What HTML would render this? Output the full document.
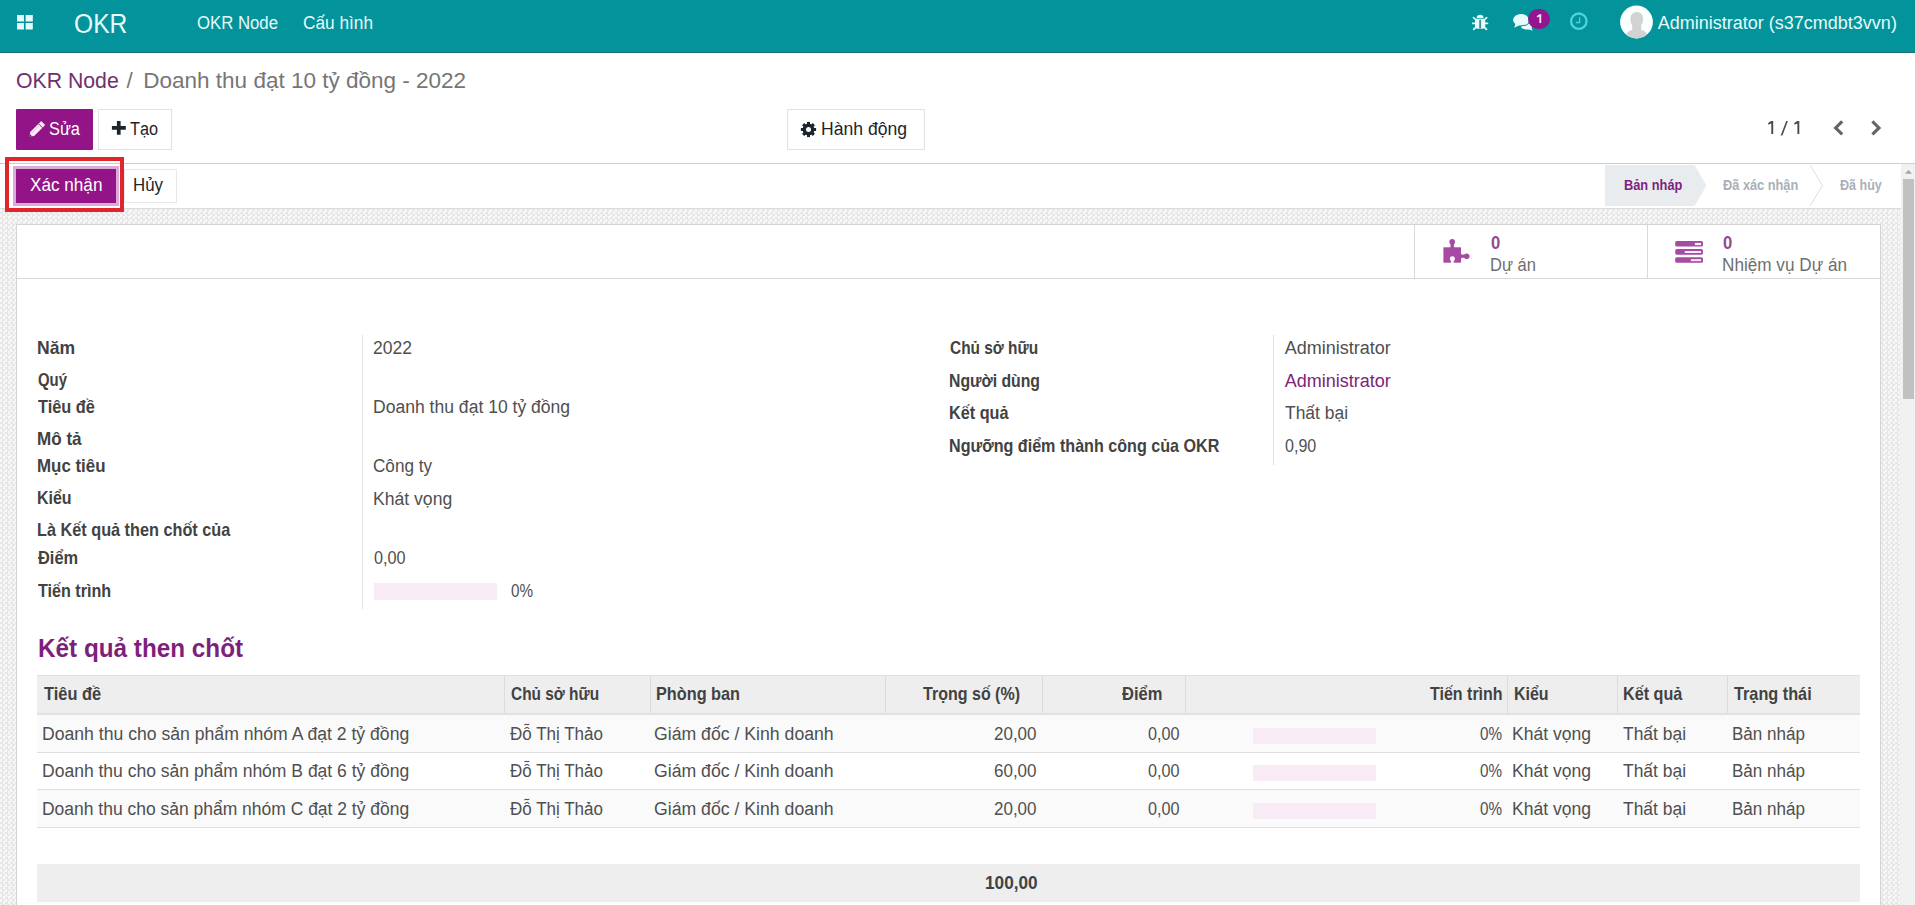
<!DOCTYPE html>
<html><head><meta charset="utf-8"><title>OKR Node</title>
<style>
html,body{margin:0;padding:0;}
body{width:1915px;height:905px;overflow:hidden;position:relative;background:#fff;font-family:'Liberation Sans', sans-serif;}
.t{position:absolute;white-space:nowrap;font-family:'Liberation Sans', sans-serif;transform-origin:0 0;}
.a{position:absolute;}
</style></head><body>
<!-- navbar -->
<div class="a" style="left:0;top:0;width:1915px;height:52px;background:#03939a"></div>
<div class="a" style="left:0;top:52px;width:1915px;height:1px;background:#1e6c72"></div>
<svg class="a" style="left:17px;top:15px" width="17" height="15" viewBox="0 0 17 15"><g fill="#e6fbfb"><rect x="0" y="0" width="7" height="6.5"/><rect x="8.6" y="0" width="7.2" height="6.5"/><rect x="0" y="8" width="7" height="6.5"/><rect x="8.6" y="8" width="7.2" height="6.5"/></g></svg>
<!-- bug -->
<svg class="a" style="left:1470px;top:13px" width="20" height="19" viewBox="0 0 20 19"><g fill="#e6fbfb"><path d="M6.6 4.9 Q6.9 1.7 10.1 1.7 Q13.3 1.7 13.6 4.9 Z"/><path d="M5 5.8 H15.2 V13.6 Q15.2 15.8 12.8 15.8 H7.4 Q5 15.8 5 13.6 Z"/></g><rect x="9.2" y="6.8" width="1.9" height="8.7" fill="#3f8f95"/><g stroke="#e6fbfb" stroke-width="1.7" stroke-linecap="round"><line x1="3.5" y1="4.7" x2="5.4" y2="6.3"/><line x1="16.7" y1="4.7" x2="14.8" y2="6.3"/><line x1="2.7" y1="10.3" x2="5" y2="10.3"/><line x1="17.5" y1="10.3" x2="15.2" y2="10.3"/><line x1="5.4" y1="14.6" x2="3.7" y2="16.3"/><line x1="14.8" y1="14.6" x2="16.5" y2="16.3"/></g></svg>
<!-- chat -->
<svg class="a" style="left:1511px;top:12px" width="26" height="20" viewBox="0 0 26 20"><g fill="#e6fbfb"><path d="M10 9 Q18 9.5 20.5 12.5 Q21.5 15.5 20.5 16.5 L22 18.5 Q18.5 18 17.5 17.5 Q13 18 10.5 16 Z"/><ellipse cx="10" cy="7.8" rx="8" ry="5.8"/><path d="M4.5 11.5 L3.2 15.8 L8.5 13.2 Z"/></g><path d="M10.2 13.7 Q16 14 18 11.2" stroke="#1f8a8f" stroke-width="1" fill="none"/></svg>
<div class="a" style="left:1528px;top:9px;width:22px;height:19.5px;border-radius:10px;background:#931590"></div>
<svg class="a" style="left:1535px;top:13px" width="8" height="12" viewBox="0 0 8 12"><path d="M4.4 1.3 H6.2 V10.1 H4.4 V3.6 L1.9 4.5 V2.9 Z" fill="#fbe3fa"/></svg>
<!-- clock -->
<svg class="a" style="left:1568px;top:11px" width="22" height="21" viewBox="0 0 22 21"><circle cx="10.8" cy="10.2" r="7.7" fill="none" stroke="#4dd2da" stroke-width="2.4"/><path d="M11.6 6.2 V11.5 H7.8" fill="none" stroke="#4dd2da" stroke-width="1.3"/></svg>
<!-- avatar -->
<svg class="a" style="left:1619px;top:5px" width="35" height="34" viewBox="0 0 35 34"><circle cx="17.5" cy="17" r="16.4" fill="#fbffff"/><clipPath id="cav"><circle cx="17.5" cy="17" r="16.4"/></clipPath><g fill="#d2d2d2" clip-path="url(#cav)"><rect x="11.5" y="7" width="12.5" height="14.5" rx="6"/><rect x="13.2" y="18" width="9" height="8"/><path d="M6.5 34 Q7 25.5 13.5 25 L21.5 25 Q28.5 25.5 29 34 Z"/></g></svg>

<!-- control panel -->
<div class="a" style="left:16px;top:109px;width:77px;height:41px;background:#921486;border-radius:1px"></div>
<svg class="a" style="left:24px;top:115px" width="30" height="30" viewBox="0 0 30 30"><g transform="translate(5.6 21.6) rotate(-45)"><path d="M0 0 L3.6 -2.8 H18.6 Q19.2 -2.8 19.2 -2.2 V2.2 Q19.2 2.8 18.6 2.8 H3.6 Z" fill="#fbe9fa"/><path d="M0 0 L1.9 -1.5 V1.5 Z" fill="#3a2a3a"/><line x1="15.4" y1="-2.9" x2="15.4" y2="2.9" stroke="#921486" stroke-width="0.9"/><line x1="4" y1="-1" x2="14.6" y2="-1" stroke="#b07aad" stroke-width="0.6" stroke-dasharray="0.9 0.9"/></g></svg>
<div class="a" style="left:98px;top:109px;width:72px;height:39px;border:1px solid #dee2e6;background:#fff"></div>
<svg class="a" style="left:110px;top:120px" width="17" height="17" viewBox="0 0 17 17"><path d="M6.9 1.1 H10.6 V6.1 H15.8 V9.8 H10.6 V14.8 H6.9 V9.8 H1.9 V6.1 H6.9 Z" fill="#1c252d"/></svg>
<div class="a" style="left:787px;top:109px;width:136px;height:39px;border:1px solid #dee2e6;background:#fff"></div>
<svg class="a" style="left:799px;top:119.5px" width="19" height="19" viewBox="-9.5 -9.5 19 19"><g fill="#1c2630"><circle r="5.9"/><rect x="-1.5" y="-7.6" width="3" height="3.2" transform="rotate(0)"/><rect x="-1.5" y="-7.6" width="3" height="3.2" transform="rotate(45)"/><rect x="-1.5" y="-7.6" width="3" height="3.2" transform="rotate(90)"/><rect x="-1.5" y="-7.6" width="3" height="3.2" transform="rotate(135)"/><rect x="-1.5" y="-7.6" width="3" height="3.2" transform="rotate(180)"/><rect x="-1.5" y="-7.6" width="3" height="3.2" transform="rotate(225)"/><rect x="-1.5" y="-7.6" width="3" height="3.2" transform="rotate(270)"/><rect x="-1.5" y="-7.6" width="3" height="3.2" transform="rotate(315)"/></g><circle r="2.5" fill="#fff"/></svg>
<svg class="a" style="left:1830px;top:118px" width="56" height="20" viewBox="0 0 56 20"><path d="M12.2 3.4 L5.6 9.9 L12.2 16.4" fill="none" stroke="#656565" stroke-width="3.1" stroke-linejoin="miter"/><path d="M42.4 3.4 L49 9.9 L42.4 16.4" fill="none" stroke="#656565" stroke-width="3.1"/></svg>
<svg class="a" style="left:1765px;top:118px" width="38" height="20" viewBox="0 0 38 20"><g fill="#4a4a4a"><path d="M6.1 3 H8.2 V16 H6.3 V5.6 L3.2 6.8 V5.1 Z"/><path d="M32.2 3 H34.3 V16 H32.4 V5.6 L29.3 6.8 V5.1 Z"/><path d="M21.2 3 H22.9 L17.4 17.5 H15.7 Z"/></g></svg>
<div class="a" style="left:0;top:163px;width:1915px;height:1px;background:#cfcfcf"></div>

<!-- statusbar -->
<div class="a" style="left:0;top:208px;width:1901px;height:1px;background:#d9dcdf"></div>
<div class="a" style="left:13px;top:166px;width:106px;height:40px;background:#dda9d9"></div>
<div class="a" style="left:16px;top:169px;width:100px;height:34px;background:#921486"></div>
<div class="a" style="left:124px;top:169px;width:51px;height:32px;border:1px solid #e6e8ea;background:#fff"></div>
<svg class="a" style="left:1600px;top:164px" width="301" height="44" viewBox="0 0 301 44"><path d="M5 1 H94.5 L106.5 21.5 L94.5 42 H5 Z" fill="#e9ecef"/><path d="M210 1 L222.5 21.5 L210 42" fill="none" stroke="#dcdfe3" stroke-width="1"/></svg>
<!-- background texture -->
<div class="a" style="left:0;top:209px;width:1901px;height:696px;background:repeating-conic-gradient(#e7e7e7 0% 25%, #f7f7f7 0% 50%) 0 0/5px 5px"></div>
<!-- scrollbar -->
<div class="a" style="left:1901px;top:164px;width:14px;height:741px;background:#f1f1f1"></div>
<svg class="a" style="left:1901px;top:164px" width="14" height="14" viewBox="0 0 14 14"><path d="M4 9.8 L7.5 6 L11 9.8 Z" fill="#a3a3a3"/></svg>
<div class="a" style="left:1903px;top:179px;width:11px;height:220px;background:#c1c1c1"></div>
<!-- sheet -->
<div class="a" style="left:16px;top:224px;width:1863px;height:700px;border:1px solid #d4d4d4;background:#fff"></div>
<div class="a" style="left:17px;top:278px;width:1863px;height:1px;background:#d9d9d9"></div>
<div class="a" style="left:1414px;top:225px;width:1px;height:53px;background:#d9d9d9"></div>
<div class="a" style="left:1647px;top:225px;width:1px;height:53px;background:#d9d9d9"></div>
<!-- puzzle -->
<svg class="a" style="left:1440px;top:236px" width="32" height="30" viewBox="0 0 32 30"><g fill="#a64aa3"><rect x="3.4" y="11.3" width="17.6" height="15.4"/><circle cx="12.2" cy="5.9" r="2.8"/><rect x="10.6" y="6" width="3.3" height="6"/><path d="M9.6 11.4 Q12.2 9.2 14.9 11.4 Z"/><circle cx="26.7" cy="20.2" r="2.8"/><rect x="20" y="18.6" width="6" height="3.2"/><path d="M20.9 17.4 Q23.2 20.2 20.9 23 Z"/></g><g fill="#ffffff"><circle cx="12.4" cy="22.8" r="2.5"/><rect x="11.1" y="23" width="2.6" height="4"/></g></svg>
<!-- tasks -->
<svg class="a" style="left:1674px;top:240px" width="31" height="24" viewBox="0 0 31 24"><g fill="#a64aa3"><rect x="1.2" y="1" width="27.8" height="5.6" rx="1.6"/><rect x="1.2" y="9.1" width="27.8" height="5.6" rx="1.6"/><rect x="1.2" y="17.2" width="27.8" height="5.6" rx="1.6"/></g><g fill="#fbeefa"><rect x="20.9" y="2.9" width="6.2" height="2.2"/><rect x="10.8" y="11" width="16.3" height="2"/><rect x="16.8" y="19.2" width="10.3" height="1.9"/></g></svg>
<!-- form separators -->
<div class="a" style="left:362px;top:335px;width:1px;height:274px;background:#e2e2e2"></div>
<div class="a" style="left:1273px;top:335px;width:1px;height:130px;background:#e2e2e2"></div>
<div class="a" style="left:374px;top:583px;width:123px;height:16.5px;background:#f8ebf5"></div>
<!-- table -->
<div class="a" style="left:37px;top:675px;width:1823px;height:38px;background:#eeeeee"></div>
<div class="a" style="left:37px;top:675px;width:1823px;height:1px;background:#e0e0e0"></div>
<div class="a" style="left:37px;top:713px;width:1823px;height:2px;background:#dee2e6"></div>
<div class="a" style="left:504px;top:676px;width:1px;height:37px;background:#dcdcdc"></div>
<div class="a" style="left:650px;top:676px;width:1px;height:37px;background:#dcdcdc"></div>
<div class="a" style="left:885px;top:676px;width:1px;height:37px;background:#dcdcdc"></div>
<div class="a" style="left:1042px;top:676px;width:1px;height:37px;background:#dcdcdc"></div>
<div class="a" style="left:1185px;top:676px;width:1px;height:37px;background:#dcdcdc"></div>
<div class="a" style="left:1507px;top:676px;width:1px;height:37px;background:#dcdcdc"></div>
<div class="a" style="left:1617px;top:676px;width:1px;height:37px;background:#dcdcdc"></div>
<div class="a" style="left:1727px;top:676px;width:1px;height:37px;background:#dcdcdc"></div>
<div class="a" style="left:37px;top:715px;width:1823px;height:37px;background:#fafafa"></div>
<div class="a" style="left:37px;top:752px;width:1823px;height:1px;background:#dfdfdf"></div>
<div class="a" style="left:37px;top:789px;width:1823px;height:1px;background:#dfdfdf"></div>
<div class="a" style="left:37px;top:790px;width:1823px;height:37px;background:#fafafa"></div>
<div class="a" style="left:37px;top:827px;width:1823px;height:1px;background:#dfdfdf"></div>
<div class="a" style="left:37px;top:864px;width:1823px;height:38px;background:#eeeeee"></div>
<div class="a" style="left:1253px;top:727.5px;width:123px;height:16px;background:#f8ebf5"></div>
<div class="a" style="left:1253px;top:764.8px;width:123px;height:16px;background:#f8ebf5"></div>
<div class="a" style="left:1253px;top:802.5px;width:123px;height:16px;background:#f8ebf5"></div>
<!-- red annotation -->
<div class="a" style="left:5px;top:157px;width:111px;height:47px;border:4px solid #e0262b"></div>

<span class="t" style="left:74.09px;top:10.70px;font-size:27px;line-height:27px;color:#e6fbfb;transform:scaleX(0.9107);">OKR</span>
<span class="t" style="left:197.47px;top:13.70px;font-size:18px;line-height:18px;color:#e6fbfb;transform:scaleX(0.9302);">OKR Node</span>
<span class="t" style="left:302.64px;top:13.70px;font-size:18px;line-height:18px;color:#e6fbfb;transform:scaleX(0.9577);">Cấu hình</span>
<span class="t" style="left:1657.80px;top:13.70px;font-size:18px;line-height:18px;color:#e6fbfb;">Administrator (s37cmdbt3vvn)</span>
<span class="t" style="left:15.96px;top:69.80px;font-size:22.5px;line-height:22.5px;color:#71306b;transform:scaleX(0.9439);">OKR Node</span>
<span class="t" style="left:126.60px;top:69.80px;font-size:22.5px;line-height:22.5px;color:#777777;">/</span>
<span class="t" style="left:143.30px;top:69.90px;font-size:22.5px;line-height:22.5px;color:#767676;">Doanh thu đạt 10 tỷ đồng - 2022</span>
<span class="t" style="left:48.59px;top:119.60px;font-size:18px;line-height:18px;color:#ffffff;transform:scaleX(0.9091);">Sửa</span>
<span class="t" style="left:130.30px;top:119.60px;font-size:18px;line-height:18px;color:#212529;transform:scaleX(0.9032);">Tạo</span>
<span class="t" style="left:820.82px;top:119.70px;font-size:18px;line-height:18px;color:#212529;transform:scaleX(0.9767);">Hành động</span>
<span class="t" style="left:29.80px;top:176.00px;font-size:18px;line-height:18px;color:#ffffff;transform:scaleX(0.9520);">Xác nhận</span>
<span class="t" style="left:133.06px;top:176.00px;font-size:18px;line-height:18px;color:#212529;transform:scaleX(0.9355);">Hủy</span>
<span class="t" style="left:1624.47px;top:176.80px;font-size:15.5px;line-height:15.5px;color:#801e7e;font-weight:700;transform:scaleX(0.8261);">Bản nháp</span>
<span class="t" style="left:1723.20px;top:176.80px;font-size:15.5px;line-height:15.5px;color:#a8b0b8;font-weight:700;transform:scaleX(0.8242);">Đã xác nhận</span>
<span class="t" style="left:1839.50px;top:176.80px;font-size:15.5px;line-height:15.5px;color:#a8b0b8;font-weight:700;transform:scaleX(0.8077);">Đã hủy</span>
<span class="t" style="left:1490.60px;top:233.70px;font-size:18.5px;line-height:18.5px;color:#924a90;font-weight:700;transform:scaleX(0.9000);">0</span>
<span class="t" style="left:1489.88px;top:255.90px;font-size:18px;line-height:18px;color:#6f6f6f;transform:scaleX(0.9167);">Dự án</span>
<span class="t" style="left:1723.00px;top:233.70px;font-size:18.5px;line-height:18.5px;color:#924a90;font-weight:700;transform:scaleX(0.9000);">0</span>
<span class="t" style="left:1722.05px;top:255.90px;font-size:18px;line-height:18px;color:#6f6f6f;transform:scaleX(0.9535);">Nhiệm vụ Dự án</span>
<span class="t" style="left:37.28px;top:338.00px;font-size:19px;line-height:19px;color:#424242;font-weight:700;transform:scaleX(0.9231);">Năm</span>
<span class="t" style="left:38.20px;top:370.00px;font-size:19px;line-height:19px;color:#424242;font-weight:700;transform:scaleX(0.7838);">Quý</span>
<span class="t" style="left:38.20px;top:396.50px;font-size:19px;line-height:19px;color:#424242;font-weight:700;transform:scaleX(0.8591);">Tiêu đề</span>
<span class="t" style="left:37.30px;top:429.00px;font-size:19px;line-height:19px;color:#424242;font-weight:700;transform:scaleX(0.8980);">Mô tả</span>
<span class="t" style="left:37.31px;top:455.50px;font-size:19px;line-height:19px;color:#424242;font-weight:700;transform:scaleX(0.8893);">Mục tiêu</span>
<span class="t" style="left:37.36px;top:488.40px;font-size:19px;line-height:19px;color:#424242;font-weight:700;transform:scaleX(0.8410);">Kiểu</span>
<span class="t" style="left:37.34px;top:520.30px;font-size:19px;line-height:19px;color:#424242;font-weight:700;transform:scaleX(0.8556);">Là Kết quả then chốt của</span>
<span class="t" style="left:38.20px;top:547.80px;font-size:19px;line-height:19px;color:#424242;font-weight:700;transform:scaleX(0.8630);">Điểm</span>
<span class="t" style="left:38.20px;top:580.80px;font-size:19px;line-height:19px;color:#424242;font-weight:700;transform:scaleX(0.8494);">Tiến trình</span>
<span class="t" style="left:372.73px;top:339.00px;font-size:18px;line-height:18px;color:#4f4f4f;transform:scaleX(0.9744);">2022</span>
<span class="t" style="left:372.72px;top:397.80px;font-size:18px;line-height:18px;color:#4f4f4f;transform:scaleX(0.9750);">Doanh thu đạt 10 tỷ đồng</span>
<span class="t" style="left:372.75px;top:456.60px;font-size:18px;line-height:18px;color:#4f4f4f;transform:scaleX(0.9508);">Công ty</span>
<span class="t" style="left:372.72px;top:489.50px;font-size:18px;line-height:18px;color:#4f4f4f;transform:scaleX(0.9772);">Khát vọng</span>
<span class="t" style="left:373.70px;top:548.80px;font-size:18px;line-height:18px;color:#4f4f4f;transform:scaleX(0.9000);">0,00</span>
<span class="t" style="left:510.60px;top:581.50px;font-size:18px;line-height:18px;color:#4f4f4f;transform:scaleX(0.8462);">0%</span>
<span class="t" style="left:949.60px;top:338.00px;font-size:19px;line-height:19px;color:#424242;font-weight:700;transform:scaleX(0.8120);">Chủ sở hữu</span>
<span class="t" style="left:948.77px;top:370.60px;font-size:19px;line-height:19px;color:#424242;font-weight:700;transform:scaleX(0.8296);">Người dùng</span>
<span class="t" style="left:948.75px;top:402.60px;font-size:19px;line-height:19px;color:#424242;font-weight:700;transform:scaleX(0.8536);">Kết quả</span>
<span class="t" style="left:948.75px;top:435.50px;font-size:19px;line-height:19px;color:#424242;font-weight:700;transform:scaleX(0.8486);">Ngưỡng điểm thành công của OKR</span>
<span class="t" style="left:1284.70px;top:339.00px;font-size:18px;line-height:18px;color:#4f4f4f;">Administrator</span>
<span class="t" style="left:1284.70px;top:371.60px;font-size:18px;line-height:18px;color:#7c2577;">Administrator</span>
<span class="t" style="left:1284.70px;top:403.60px;font-size:18px;line-height:18px;color:#4f4f4f;transform:scaleX(0.9688);">Thất bại</span>
<span class="t" style="left:1284.70px;top:436.50px;font-size:18px;line-height:18px;color:#4f4f4f;transform:scaleX(0.8914);">0,90</span>
<span class="t" style="left:37.83px;top:635.80px;font-size:25px;line-height:25px;color:#7f1f7c;font-weight:700;transform:scaleX(0.9714);">Kết quả then chốt</span>
<span class="t" style="left:44.30px;top:683.90px;font-size:19px;line-height:19px;color:#424242;font-weight:700;transform:scaleX(0.8636);">Tiêu đề</span>
<span class="t" style="left:510.70px;top:683.90px;font-size:19px;line-height:19px;color:#424242;font-weight:700;transform:scaleX(0.8120);">Chủ sở hữu</span>
<span class="t" style="left:656.34px;top:683.90px;font-size:19px;line-height:19px;color:#424242;font-weight:700;transform:scaleX(0.8563);">Phòng ban</span>
<span class="t" style="left:922.70px;top:683.90px;font-size:19px;line-height:19px;color:#424242;font-weight:700;transform:scaleX(0.8435);">Trọng số (%)</span>
<span class="t" style="left:1122.20px;top:683.90px;font-size:19px;line-height:19px;color:#424242;font-weight:700;transform:scaleX(0.8696);">Điểm</span>
<span class="t" style="left:1430.40px;top:683.90px;font-size:19px;line-height:19px;color:#424242;font-weight:700;transform:scaleX(0.8424);">Tiến trình</span>
<span class="t" style="left:1513.76px;top:683.90px;font-size:19px;line-height:19px;color:#424242;font-weight:700;transform:scaleX(0.8410);">Kiểu</span>
<span class="t" style="left:1623.45px;top:683.90px;font-size:19px;line-height:19px;color:#424242;font-weight:700;transform:scaleX(0.8507);">Kết quả</span>
<span class="t" style="left:1734.40px;top:683.90px;font-size:19px;line-height:19px;color:#424242;font-weight:700;transform:scaleX(0.8556);">Trạng thái</span>
<span class="t" style="left:42.22px;top:724.90px;font-size:18px;line-height:18px;color:#4f4f4f;transform:scaleX(0.9786);">Doanh thu cho sản phẩm nhóm A đạt 2 tỷ đồng</span>
<span class="t" style="left:509.60px;top:724.90px;font-size:18px;line-height:18px;color:#4f4f4f;transform:scaleX(0.9439);">Đỗ Thị Thảo</span>
<span class="t" style="left:654.42px;top:724.90px;font-size:18px;line-height:18px;color:#4f4f4f;transform:scaleX(0.9812);">Giám đốc / Kinh doanh</span>
<span class="t" style="left:994.36px;top:724.90px;font-size:18px;line-height:18px;color:#4f4f4f;transform:scaleX(0.9432);">20,00</span>
<span class="t" style="left:1147.80px;top:724.90px;font-size:18px;line-height:18px;color:#4f4f4f;transform:scaleX(0.9000);">0,00</span>
<span class="t" style="left:1480.00px;top:724.90px;font-size:18px;line-height:18px;color:#4f4f4f;transform:scaleX(0.8462);">0%</span>
<span class="t" style="left:1512.03px;top:724.90px;font-size:18px;line-height:18px;color:#4f4f4f;transform:scaleX(0.9747);">Khát vọng</span>
<span class="t" style="left:1623.20px;top:724.90px;font-size:18px;line-height:18px;color:#4f4f4f;transform:scaleX(0.9688);">Thất bại</span>
<span class="t" style="left:1732.25px;top:724.90px;font-size:18px;line-height:18px;color:#4f4f4f;transform:scaleX(0.9474);">Bản nháp</span>
<span class="t" style="left:42.23px;top:762.20px;font-size:18px;line-height:18px;color:#4f4f4f;transform:scaleX(0.9733);">Doanh thu cho sản phẩm nhóm B đạt 6 tỷ đồng</span>
<span class="t" style="left:509.60px;top:762.20px;font-size:18px;line-height:18px;color:#4f4f4f;transform:scaleX(0.9439);">Đỗ Thị Thảo</span>
<span class="t" style="left:654.42px;top:762.20px;font-size:18px;line-height:18px;color:#4f4f4f;transform:scaleX(0.9812);">Giám đốc / Kinh doanh</span>
<span class="t" style="left:994.36px;top:762.20px;font-size:18px;line-height:18px;color:#4f4f4f;transform:scaleX(0.9432);">60,00</span>
<span class="t" style="left:1147.80px;top:762.20px;font-size:18px;line-height:18px;color:#4f4f4f;transform:scaleX(0.9000);">0,00</span>
<span class="t" style="left:1480.00px;top:762.20px;font-size:18px;line-height:18px;color:#4f4f4f;transform:scaleX(0.8462);">0%</span>
<span class="t" style="left:1512.03px;top:762.20px;font-size:18px;line-height:18px;color:#4f4f4f;transform:scaleX(0.9747);">Khát vọng</span>
<span class="t" style="left:1623.20px;top:762.20px;font-size:18px;line-height:18px;color:#4f4f4f;transform:scaleX(0.9688);">Thất bại</span>
<span class="t" style="left:1732.25px;top:762.20px;font-size:18px;line-height:18px;color:#4f4f4f;transform:scaleX(0.9474);">Bản nháp</span>
<span class="t" style="left:42.23px;top:799.80px;font-size:18px;line-height:18px;color:#4f4f4f;transform:scaleX(0.9707);">Doanh thu cho sản phẩm nhóm C đạt 2 tỷ đồng</span>
<span class="t" style="left:509.60px;top:799.80px;font-size:18px;line-height:18px;color:#4f4f4f;transform:scaleX(0.9439);">Đỗ Thị Thảo</span>
<span class="t" style="left:654.42px;top:799.80px;font-size:18px;line-height:18px;color:#4f4f4f;transform:scaleX(0.9812);">Giám đốc / Kinh doanh</span>
<span class="t" style="left:994.36px;top:799.80px;font-size:18px;line-height:18px;color:#4f4f4f;transform:scaleX(0.9432);">20,00</span>
<span class="t" style="left:1147.80px;top:799.80px;font-size:18px;line-height:18px;color:#4f4f4f;transform:scaleX(0.9000);">0,00</span>
<span class="t" style="left:1480.00px;top:799.80px;font-size:18px;line-height:18px;color:#4f4f4f;transform:scaleX(0.8462);">0%</span>
<span class="t" style="left:1512.03px;top:799.80px;font-size:18px;line-height:18px;color:#4f4f4f;transform:scaleX(0.9747);">Khát vọng</span>
<span class="t" style="left:1623.20px;top:799.80px;font-size:18px;line-height:18px;color:#4f4f4f;transform:scaleX(0.9688);">Thất bại</span>
<span class="t" style="left:1732.25px;top:799.80px;font-size:18px;line-height:18px;color:#4f4f4f;transform:scaleX(0.9474);">Bản nháp</span>
<span class="t" style="left:984.89px;top:872.70px;font-size:19px;line-height:19px;color:#424242;font-weight:700;transform:scaleX(0.9053);">100,00</span>
</body></html>
